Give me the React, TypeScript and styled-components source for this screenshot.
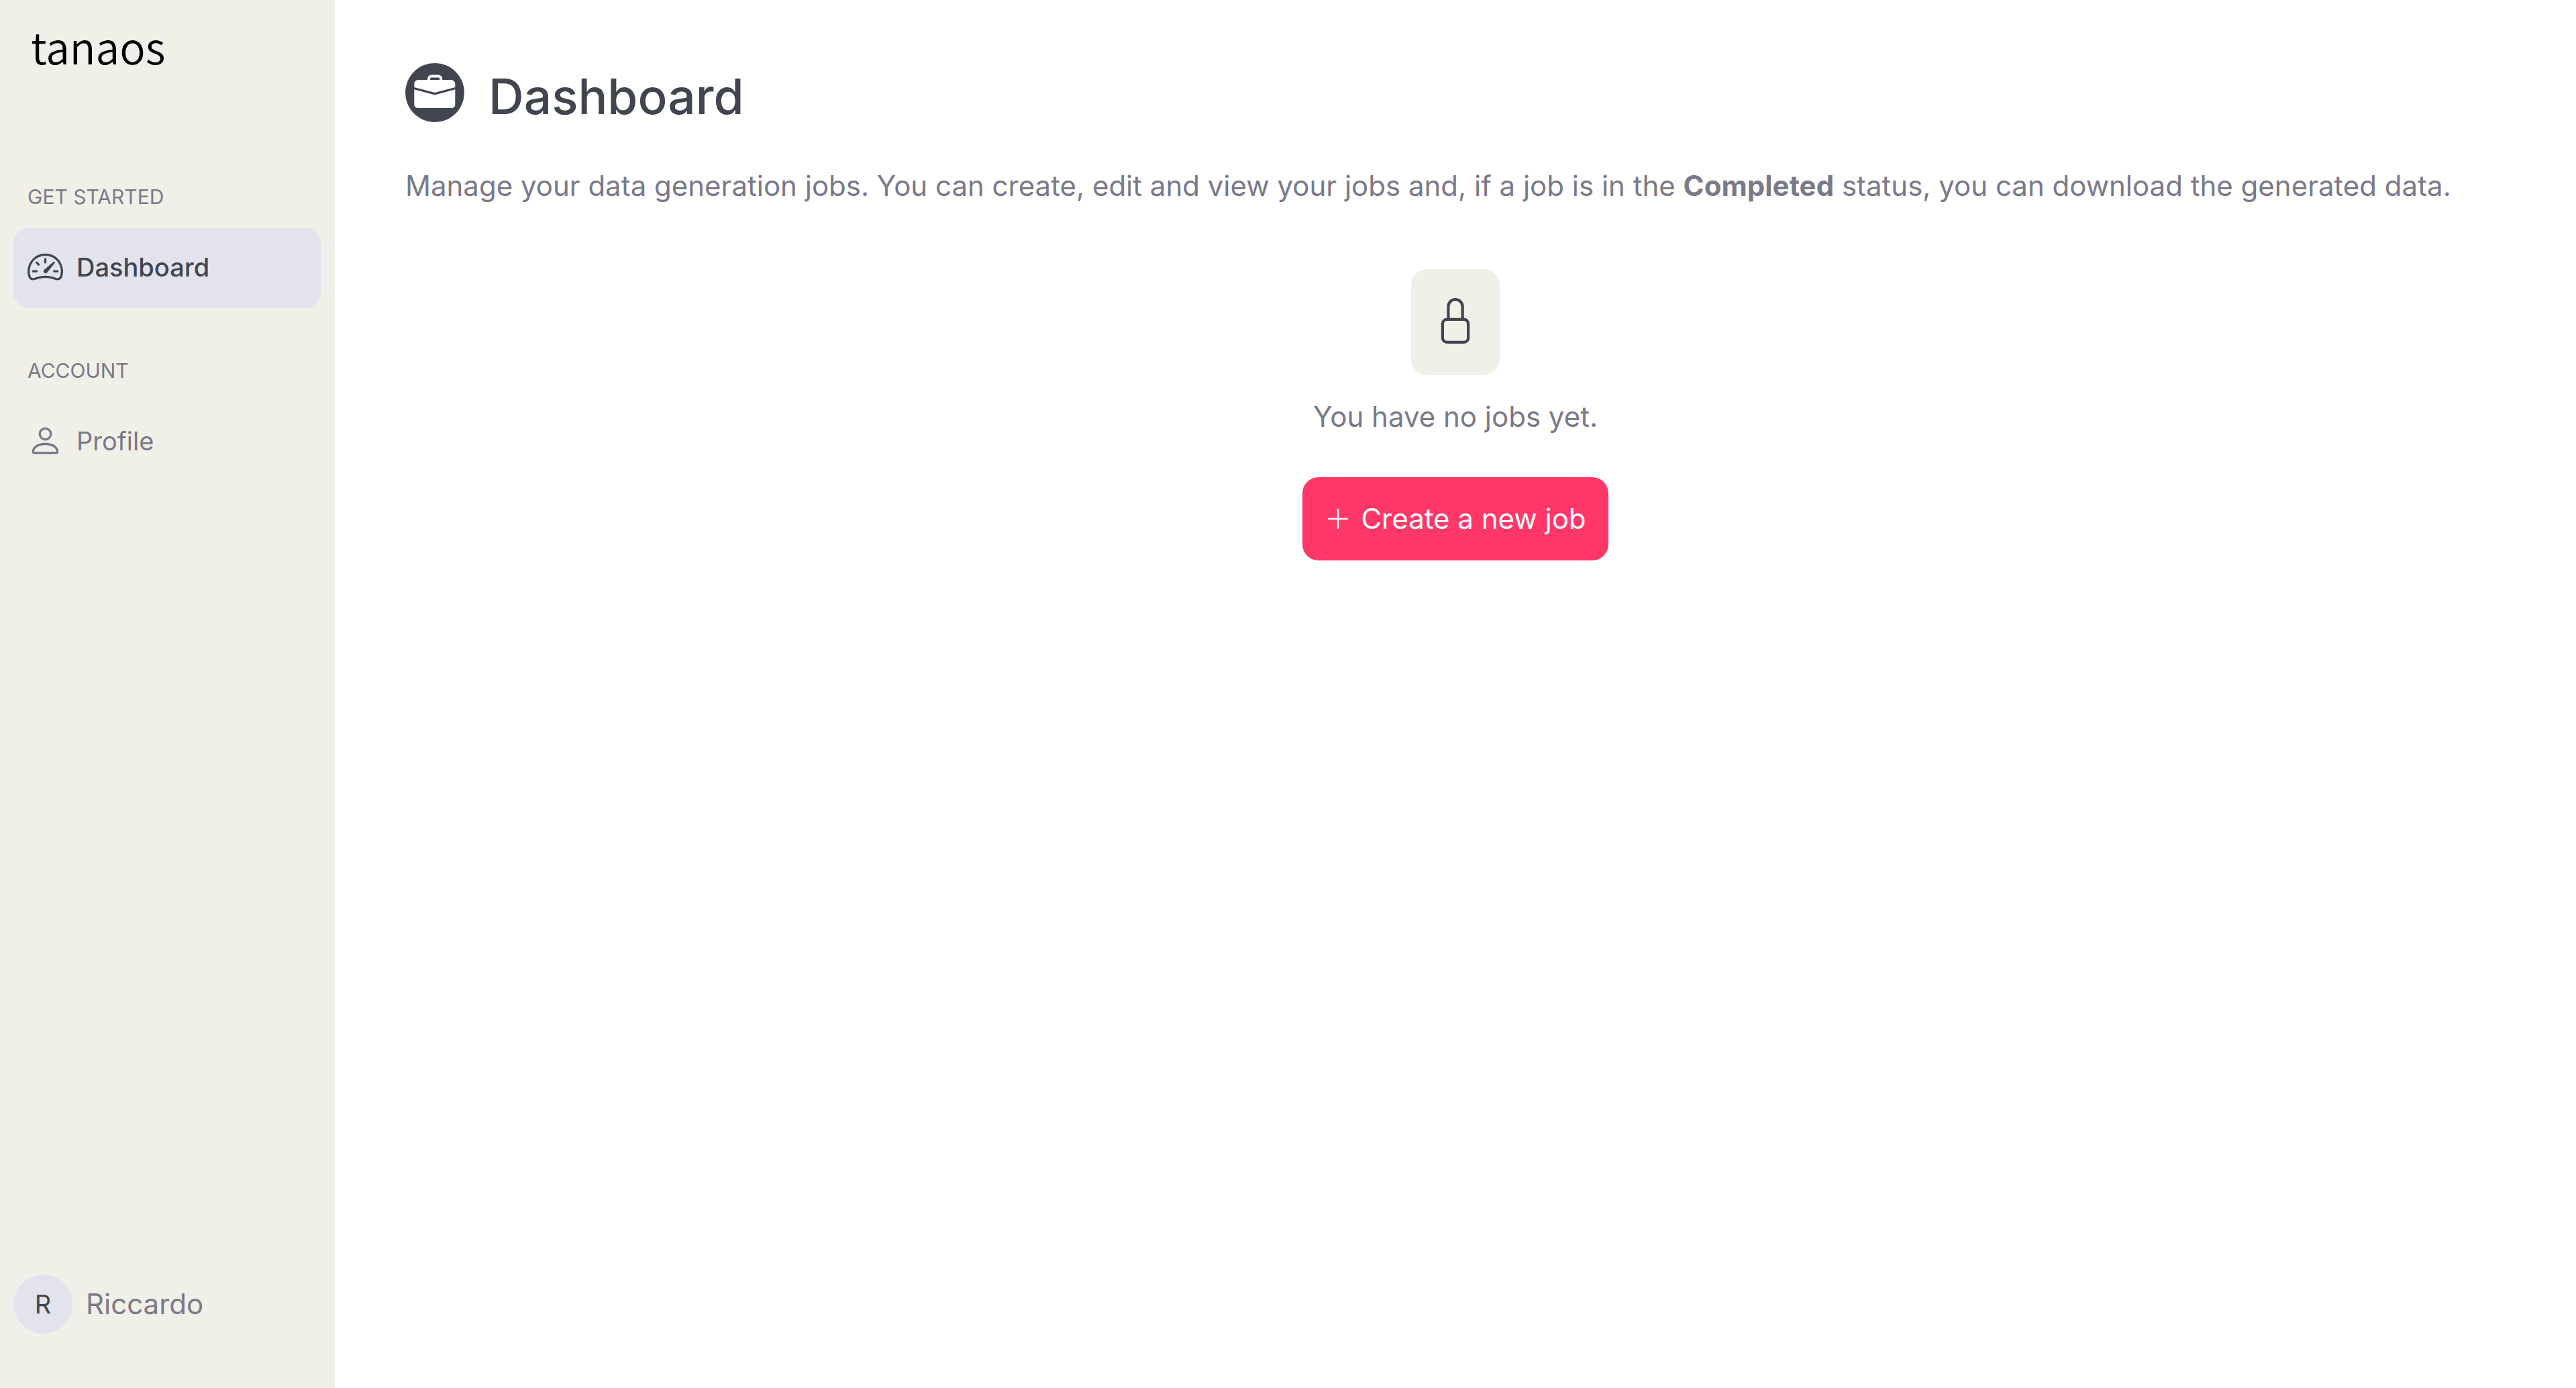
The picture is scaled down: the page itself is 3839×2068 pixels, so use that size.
import React from "react";
import styled, { createGlobalStyle } from "styled-components";
import { BsLock, BsPerson, BsPlusLg, BsSpeedometer2 } from "react-icons/bs";

const ink = "#41454f";
const muted = "#7a7988";
const sand = "#f1f0e8";
const lavender = "#e3e3ed";
const accent = "#ff3868";

const GlobalStyle = createGlobalStyle`
  *, *::before, *::after { box-sizing: border-box; }
  body {
    margin: 0;
    background: #fff;
    color: ${muted};
    font-family: Inter, "Open Sans", sans-serif;
    font-size: 42px;
    line-height: 60px;
  }
  h1, h2, p, ul { margin: 0; padding: 0; }
`;

const Shell = styled.div`
  display: flex;
  min-height: 100vh;
`;

const Sidebar = styled.aside`
  display: flex;
  flex-direction: column;
  flex: 0 0 499px;
  padding: 20px 21px 81px 20px;
  background: ${sand};
`;

const Logo = styled.a`
  padding-left: 26px;
  color: #000;
  font-family: "Noto Sans CJK SC", "Open Sans", sans-serif;
  font-size: 64px;
  font-weight: 350;
  line-height: 96px;
  text-decoration: none;
`;

const Nav = styled.nav`
  display: flex;
  flex-direction: column;
  gap: 68px;
  margin-top: 152px;
`;

const NavHeading = styled.h2`
  padding-left: 21px;
  margin-bottom: 21px;
  font-size: 30px;
  font-weight: 400;
  line-height: 50px;
  text-transform: uppercase;
`;

const NavList = styled.ul`
  list-style: none;
`;

const NavLink = styled.a<{ $active?: boolean }>`
  display: flex;
  align-items: center;
  gap: 20px;
  height: 120px;
  padding: 0 21px 3px;
  border-radius: 24px;
  background: ${(p) => (p.$active ? lavender : "transparent")};
  color: ${(p) => (p.$active ? ink : muted)};
  font-size: 38px;
  font-weight: ${(p) => (p.$active ? 500 : 400)};
  text-decoration: none;

  svg { width: 53px; height: 53px; }
`;

const Account = styled.div`
  display: flex;
  align-items: center;
  gap: 20px;
  margin-top: auto;
`;

const Avatar = styled.span`
  display: grid;
  place-items: center;
  width: 88px;
  height: 88px;
  border-radius: 50%;
  background: ${lavender};
  color: ${ink};
  font-size: 38px;
`;

const Main = styled.main`
  flex: 1;
  padding: 94px 105px;
`;

const PageHeader = styled.header`
  display: flex;
  align-items: flex-start;
  gap: 36px;
  color: ${ink};
`;

const HeaderIcon = styled.svg`
  width: 88px;
  height: 88px;
`;

const Title = styled.h1`
  font-size: 73px;
  font-weight: 500;
  line-height: 100px;
`;

const Intro = styled.p`
  margin-top: 53px;
`;

const Empty = styled.section`
  display: flex;
  flex-direction: column;
  align-items: center;
  margin-top: 94px;
`;

const LockTile = styled.div`
  display: grid;
  place-items: center;
  width: 132px;
  height: 158px;
  padding-bottom: 4px;
  margin-bottom: 32px;
  border-radius: 24px;
  background: ${sand};
  color: ${ink};

  svg { width: 68px; height: 68px; }
`;

const CreateButton = styled.button`
  display: flex;
  align-items: center;
  gap: 14px;
  height: 124px;
  margin-top: 60px;
  padding: 0 33px;
  border: 0;
  border-radius: 24px;
  background: ${accent};
  color: #fff;
  font: inherit;
  cursor: pointer;

  svg { width: 40px; height: 40px; }
`;

const Briefcase = () => (
  <HeaderIcon viewBox="0 0 88 88" aria-hidden="true">
    <circle cx="44" cy="44" r="44" fill={ink} />
    <path
      d="M35 26v-2.500a4 4 0 0 1 4-4h10.300a4 4 0 0 1 4 4V26"
      fill="none"
      stroke="#fff"
      strokeWidth="4"
    />
    <path d="M13.300 36V31a6 6 0 0 1 6-6h49a6 6 0 0 1 6 6v5L44 44Z" fill="#fff" />
    <path d="M13.300 39.200L44 47.500 74.300 39.200V62a5 5 0 0 1-5 5h-51a5 5 0 0 1-5-5Z" fill="#fff" />
  </HeaderIcon>
);

const sections = [
  { heading: "Get started", label: "Dashboard", icon: BsSpeedometer2, active: true },
  { heading: "Account", label: "Profile", icon: BsPerson, active: false },
];

export default function App() {
  return (
    <>
      <GlobalStyle />
      <Shell>
        <Sidebar>
          <Logo href="#">tanaos</Logo>
          <Nav>
            {sections.map(({ heading, label, icon: Icon, active }) => (
              <div key={heading}>
                <NavHeading>{heading}</NavHeading>
                <NavList>
                  <li>
                    <NavLink href="#" $active={active}>
                      <Icon />
                      {label}
                    </NavLink>
                  </li>
                </NavList>
              </div>
            ))}
          </Nav>
          <Account>
            <Avatar>R</Avatar>
            <span>Riccardo</span>
          </Account>
        </Sidebar>
        <Main>
          <PageHeader>
            <Briefcase />
            <Title>Dashboard</Title>
          </PageHeader>
          <Intro>
            Manage your data generation jobs. You can create, edit and view your jobs and, if a job
            is in the <b>Completed</b> status, you can download the generated data.
          </Intro>
          <Empty>
            <LockTile>
              <BsLock />
            </LockTile>
            <p>You have no jobs yet.</p>
            <CreateButton type="button">
              <BsPlusLg />
              Create a new job
            </CreateButton>
          </Empty>
        </Main>
      </Shell>
    </>
  );
}
